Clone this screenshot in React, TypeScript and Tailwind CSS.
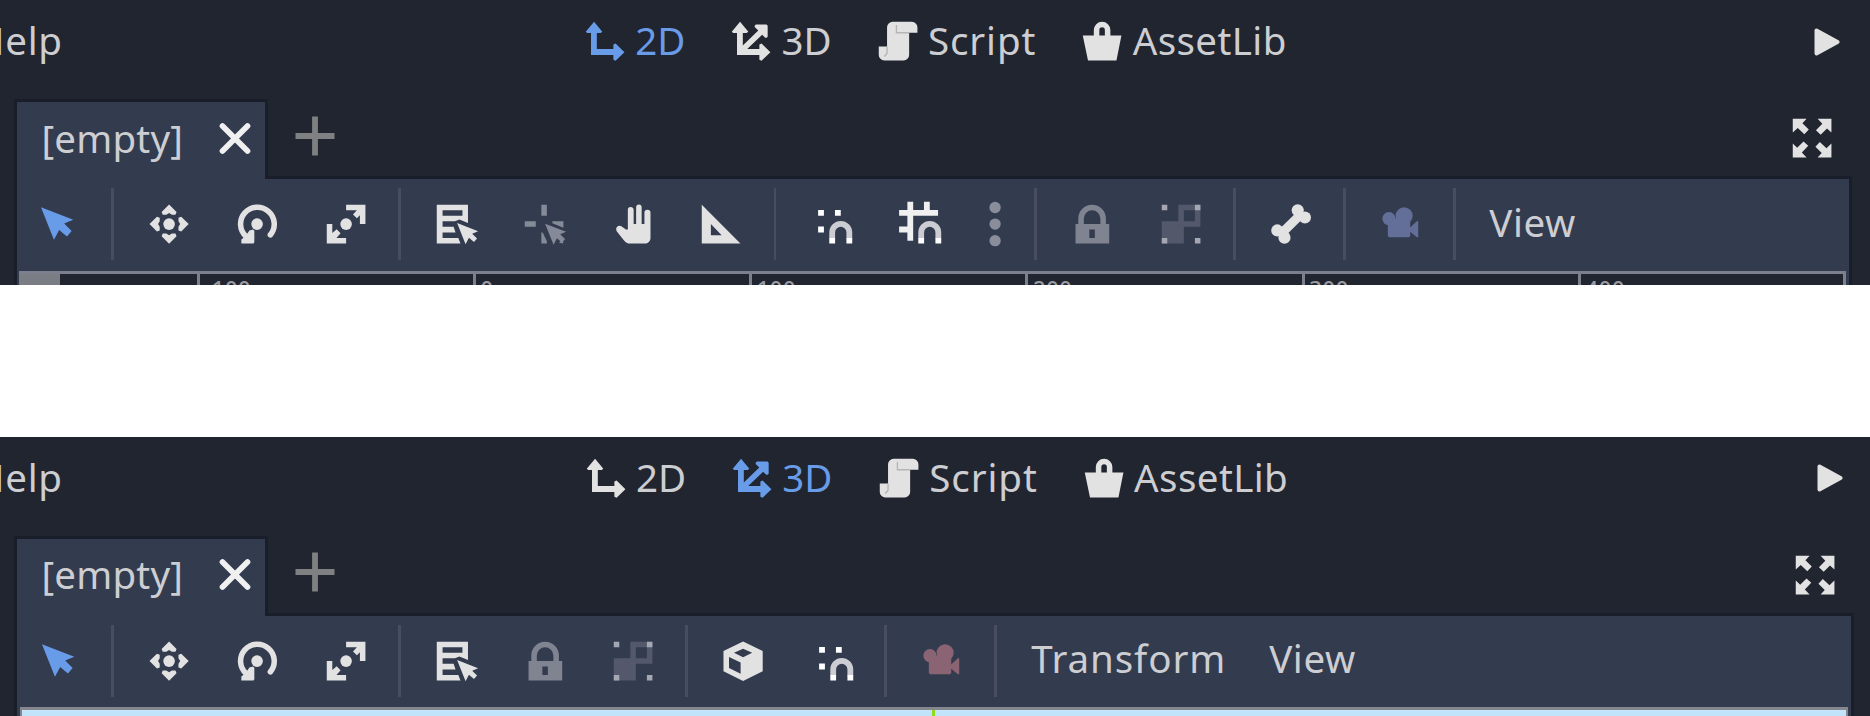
import React from "react";

type IconProps = { children: React.ReactNode; className?: string };

function Icon({ children, className = "text-[#e2e2e2]" }: IconProps) {
  return (
    <svg viewBox="0 0 16 16" fill="currentColor" className={`h-[44.2px] w-[44.2px] shrink-0 overflow-visible ${className}`}>
      {children}
    </svg>
  );
}

const ARROW = "M1.8 1.9 13.5 6.4 10.2 7.8 12.9 10.5 11.2 12.5 8.4 10.1 6.5 13.7Z";

const Icon2D = ({ className }: { className?: string }) => (
  <Icon className={className}>
    <path d="M4 1 7 4.6 6.4 5.1H5V10.9H11V9.2L11.8 8.9 15 12 11.8 15.1 11 14.8V13H2.9V5.1H1.5L1 4.6Z" />
  </Icon>
);

const Icon3D = ({ className }: { className?: string }) => (
  <Icon className={className}>
    <path d="M4 1 7 4.6 6.4 5.1H5V9.6L10.6 4.2 9.3 2.9V2.4L9.7 2H13.6L14 2.4V6.4L13.6 6.8H13.1L12 5.7 6.6 10.9H11V9.2L11.8 8.9 15 12 11.8 15.1 11 14.8V13H2.9V5.1H1.5L1 4.6Z" />
  </Icon>
);

const IconScript = () => (
  <Icon>
    <path d="M6 1H13A2 2 0 0 1 15 3V5H12V13A2 2 0 0 1 10 15H3A2 2 0 0 1 1 13V10H4V3A2 2 0 0 1 6 1Z" />
    <path d="M7.4 2.2V5H12M4 10V12.4L3 13.6" fill="none" stroke="#b5b5b5" strokeWidth="0.5" />
  </Icon>
);

const IconAsset = () => (
  <Icon>
    <path d="M1 6H5V4A3 3 0 0 1 11 4V6H15L13.2 15H2.9ZM7 6H9V4A1 1 0 0 0 7 4Z" />
  </Icon>
);

const IconSelect = () => (
  <Icon className="text-[#699ce8]">
    <path d={ARROW} />
  </Icon>
);

const IconMove = () => (
  <Icon>
    <circle cx="8" cy="8" r="2.1" />
    {[0, 90, 180, 270].map((a) => (
      <path key={a} transform={`rotate(${a} 8 8)`} d="M8 0.9 5.3 3.6 5.7 4.6H7L8 4 9 4.6H10.3L10.7 3.6Z" />
    ))}
  </Icon>
);

const IconRotate = () => (
  <Icon>
    <circle cx="8" cy="8" r="2.1" />
    <path d="M12.8 11.9A6.1 6.1 0 1 0 4 12.5" fill="none" stroke="currentColor" strokeWidth="2" strokeLinecap="round" />
    <path d="M2.3 15V13.6L3.8 12.4 5.2 10.3 6.5 10 7 10.4V14.6L6.7 15Z" />
  </Icon>
);

const IconScale = () => (
  <Icon>
    <circle cx="8" cy="8" r="2.1" />
    <path d="M8 1H15V8H13V4.8L11.9 5.9 10.5 4.5 11.9 3H8Z" />
    <path d="M8 15H1V8H3V11.2L4.6 9.9 6 11.3 4.5 13H8Z" />
  </Icon>
);

const IconList = () => (
  <Icon>
    <path d="M1 1H12.3V7.6L9.2 6.3 7.6 7H3.1V9H7.1L7.8 11H3.1V13H8.8L9.6 15H1ZM3.1 3V5H10.3V3Z" />
    <path d={ARROW} transform="translate(7.2 6.4) scale(.65)" />
  </Icon>
);

const IconPivot = () => (
  <Icon className="text-[#858a98]">
    <path d="M7 1H9V5H7ZM1 7H5V9H1ZM11 7H15V9.3L11 7.7ZM7 11H7.5L9 14.2V15H7ZM13.4 14.8 14.9 13.2V15Z" />
    <path d={ARROW} transform="translate(7.2 6.6) scale(.65)" />
  </Icon>
);

const IconHand = () => (
  <Icon>
    <path d="M6.1 10V2.8Q6.1 1.8 7.1 1.8T8.2 2.8V8H9.1V2Q9.1 .9 10.1 .9T11.1 2V8H12.1V3.8Q12.1 2.8 13.2 2.8T14.3 3.8V13.3Q14 14.7 12.8 15H6.2Q5.2 14.8 4.5 13.7L2 10.5Q1.6 9.5 2.2 9 3 8.3 3.9 8.9L5.4 10Z" />
  </Icon>
);

const IconTriangle = () => (
  <Icon>
    <path d="M1 1V15H15ZM4.3 8 8.2 12H4.3Z" fillRule="evenodd" />
  </Icon>
);

const Magnet = () => (
  <>
    <path d="M8.4 13.2V11A3.1 3.1 0 0 1 14.6 11V13.2" fill="none" stroke="#cbcdd3" strokeWidth="2.1" />
    <path d="M7.35 13H9.45V15H7.35ZM13.55 13H15.65V15H13.55Z" fill="#ffffff" />
  </>
);

const IconSnap = () => (
  <Icon className="text-white">
    <path d="M3.3 2.9H5.4V5H3.3ZM9.4 2.9H11.5V5H9.4ZM3.3 8.9H5.4V11H3.3Z" />
    <Magnet />
  </Icon>
);

const IconGridSnap = () => (
  <Icon className="text-[#f0f0f1]">
    <path d="M3.4-.1H5.5V2.9H9.4V-.1H11.5V2.9H14.5V5H5.5V14H3.4V11H.4V8.9H3.4V5H.4V2.9H3.4Z" />
    <Magnet />
  </Icon>
);

const IconDots = () => (
  <Icon className="text-[#8a8e9a]">
    <circle cx="8" cy="2" r="2.05" />
    <circle cx="8" cy="8" r="2.05" />
    <circle cx="8" cy="14" r="2.05" />
  </Icon>
);

const IconLock = () => (
  <Icon className="text-[#808491]">
    <path fillRule="evenodd" d="M2 8H3V6A5 5 0 0 1 13 6V8H14.2V15H2ZM5 8H11V6A3 3 0 0 0 5 6ZM7 10V13H9V10Z" />
  </Icon>
);

const IconGroup = () => (
  <Icon className="text-[#53596b]">
    <path fillRule="evenodd" d="M7 1H15V9H9V15H1V7H7ZM9 3V7H13V3Z" />
    <path fill="#a5a8b2" d="M1 1H3V3H1ZM13 1H15V3H13ZM1 13H3V15H1ZM13 13H15V15H13Z" />
  </Icon>
);

const IconBone = () => (
  <Icon>
    <circle cx="10.4" cy="3" r="2.2" />
    <circle cx="13" cy="5.6" r="2.2" />
    <circle cx="3" cy="10.3" r="2.2" />
    <circle cx="5.6" cy="12.9" r="2.2" />
    <path d="M4.3 11.6 11.7 4.3" stroke="currentColor" strokeWidth="3.3" />
  </Icon>
);

const IconCamera = ({ className }: { className: string }) => (
  <Icon className={className}>
    <circle cx="3.6" cy="6" r="2.4" />
    <circle cx="9.1" cy="5" r="3.1" />
    <path d="M3.2 6H11.3V9.2L13.7 7H14.2V12.8H13.7L11.3 10.8V12.3L10.9 12.8H3.6L3.2 12.3Z" />
  </Icon>
);

const IconCube = () => (
  <Icon>
    <path fillRule="evenodd" d="M8 .9 15.1 4.3V11.7L8 15.2 .9 11.7V4.3ZM8 3.5 4.7 5 8 6.6 11.3 5ZM2.9 6.5V10.5L7.1 12.6V8.5Z" />
  </Icon>
);

const IconExpand = () => (
  <Icon>
    {[0, 90, 180, 270].map((a) => (
      <path key={a} transform={`rotate(${a} 8 8)`} d="M1 1H6L4.5 2.6 6.8 4.9 5.2 6.6 2.8 4.3 1 6Z" />
    ))}
  </Icon>
);

const Cell = ({ children }: { children: React.ReactNode }) => (
  <div className="flex w-[88.5px] shrink-0 justify-center">{children}</div>
);

const Sep = () => <div className="mr-[10.8px] ml-[8px] h-[72px] w-[2.8px] shrink-0 bg-[#484e60]" />;

function NavItem({ icon, label, className }: { icon: React.ReactNode; label: string; className: string }) {
  return (
    <div className={`flex shrink-0 items-center gap-[8px] ${className}`}>
      {icon}
      <span className="-translate-y-px">{label}</span>
    </div>
  );
}

function Editor({ mode, children, footer }: { mode: "2d" | "3d"; children: React.ReactNode; footer: React.ReactNode }) {
  const is2d = mode === "2d";
  return (
    <section
      className={`flex flex-col overflow-hidden bg-[#212530] text-[#cdced2] ${is2d ? "h-[285px]" : "h-[279px]"}`}
    >
      <header className={`flex shrink-0 items-center ${is2d ? "h-[83px]" : "h-[82px]"}`}>
        <div className={`shrink-0 tracking-[0.7px] ${is2d ? "w-[583px]" : "w-[583.8px]"}`}>
          <span className="relative -top-px -ml-[24px]">Help</span>
        </div>
        <NavItem
          className={`w-[146.3px] ${is2d ? "text-[#699ce8]" : ""}`}
          icon={<Icon2D className={is2d ? "text-[#699ce8]" : "text-[#e2e2e2]"} />}
          label="2D"
        />
        <NavItem
          className={`${is2d ? "w-[146.4px]" : "w-[147px] text-[#699ce8]"}`}
          icon={<Icon3D className={is2d ? "text-[#e2e2e2]" : "text-[#699ce8]"} />}
          label="3D"
        />
        <NavItem className="w-[204.8px] tracking-[0.9px]" icon={<IconScript />} label="Script" />
        <NavItem className="tracking-[0.4px]" icon={<IconAsset />} label="AssetLib" />
        <svg viewBox="0 0 26 28" className={`ml-auto h-[28px] w-[26px] ${is2d ? "mr-[29.7px]" : "mr-[27.2px]"}`}>
          <path d="M2.5 2.5V25.5L23.5 14Z" fill="#e2e2e2" stroke="#e2e2e2" strokeWidth="4" strokeLinejoin="round" />
        </svg>
      </header>

      <div className={`flex h-[77px] shrink-0 items-start pl-[13.5px] ${is2d ? "mt-[16.3px]" : "mt-[16.6px]"}`}>
        <div className="relative z-10 flex h-[80px] w-[254.5px] shrink-0 items-center border-x-[3px] border-t-[3px] border-[#1a1e2a] bg-[#333b4f] pl-[25px]">
          <span className="w-[177.5px] -translate-y-[3px] tracking-[0.2px]">[empty]</span>
          <svg viewBox="0 0 32 32" className="h-[32px] w-[32px] shrink-0 -translate-y-[2.5px]">
            <path d="M3.5 3.5 28.5 28.5M28.5 3.5 3.5 28.5" stroke="#f0f0f1" strokeWidth="5.7" strokeLinecap="round" />
          </svg>
        </div>
        <svg viewBox="0 0 40 40" className="mt-[16.5px] ml-[27px] h-[40px] w-[40px]">
          <path d="M.5 20H39.5M20 .5V39.5" stroke="#7e8081" strokeWidth="5.8" />
        </svg>
        <div className={`mt-[17px] ml-auto ${is2d ? "mr-[35.5px]" : "mr-[33px]"}`}>
          <IconExpand />
        </div>
      </div>

      <div
        className={`ml-[13.5px] flex grow flex-col border-x-[3px] border-t-[3px] border-[#1a1e2a] bg-[#333b4f] ${is2d ? "mr-[18.5px]" : "mr-[16.5px]"}`}
      >
        <div className={`flex shrink-0 items-center ${is2d ? "h-[91.5px] pb-[1.3px]" : "h-[91.3px] pb-[1.3px]"}`}>
          <div className={`flex items-center ${is2d ? "-ml-[2.2px]" : "-ml-[1.8px]"}`}>
            <Cell><IconSelect /></Cell>
            <Sep />
            <Cell><IconMove /></Cell>
            <Cell><IconRotate /></Cell>
            <Cell><IconScale /></Cell>
            <Sep />
            <Cell><IconList /></Cell>
            {children}
          </div>
        </div>
        {footer}
      </div>
    </section>
  );
}

const TICKS = ["-100", "0", "100", "200", "300", "400"];

function Ruler() {
  return (
    <div className="mr-[2.5px] ml-[2.8px] flex h-[40px] shrink-0 border-t-[3px] border-r-[3px] border-[#7c7f8d] bg-[#212530]">
      <div className="h-full w-[41px] shrink-0 bg-[#7b7d84]" />
      <div className="flex pl-[136.3px]">
        {TICKS.map((t) => (
          <div key={t} className="w-[276.3px] shrink-0 border-l-[3px] border-[#7c7f8d] pl-[4.5px] text-[22px] leading-[28px] font-medium tracking-[0.6px] text-[#9a9ba1]">
            {t}
          </div>
        ))}
      </div>
    </div>
  );
}

function Viewport() {
  return (
    <div className="mr-[2.5px] ml-[3px] flex h-[20px] shrink-0 border-x-[2px] border-t-[3px] border-[#85868e] bg-linear-to-b from-[#c5e6fb] to-[#b4dcf8]">
      <div className="ml-[910px] h-full w-[3px] bg-[#8fdc1d]" />
    </div>
  );
}

export default function App() {
  return (
    <main className="flex h-[716px] w-[1870px] flex-col justify-between overflow-hidden bg-white font-['Noto_Sans',sans-serif] text-[38.5px] leading-none whitespace-nowrap">
      <Editor mode="2d" footer={<Ruler />}>
        <Cell><IconPivot /></Cell>
        <Cell><IconHand /></Cell>
        <Cell><IconTriangle /></Cell>
        <Sep />
        <Cell><IconSnap /></Cell>
        <Cell><IconGridSnap /></Cell>
        <div className="flex w-[62.3px] shrink-0 justify-center"><IconDots /></div>
        <Sep />
        <Cell><IconLock /></Cell>
        <Cell><IconGroup /></Cell>
        <Sep />
        <Cell><IconBone /></Cell>
        <Sep />
        <Cell><IconCamera className="text-[#636f99]" /></Cell>
        <Sep />
        <span className="ml-[22.5px] -translate-y-[2px] tracking-[0.6px]">View</span>
      </Editor>
      <Editor mode="3d" footer={<Viewport />}>
        <Cell><IconLock /></Cell>
        <Cell><IconGroup /></Cell>
        <Sep />
        <Cell><IconCube /></Cell>
        <Cell><IconSnap /></Cell>
        <Sep />
        <Cell><IconCamera className="text-[#8a6473]" /></Cell>
        <Sep />
        <span className="ml-[23.5px] w-[238px] -translate-y-[2px] tracking-[0.9px]">Transform</span>
        <span className="-translate-y-[2px] tracking-[0.6px]">View</span>
      </Editor>
    </main>
  );
}
